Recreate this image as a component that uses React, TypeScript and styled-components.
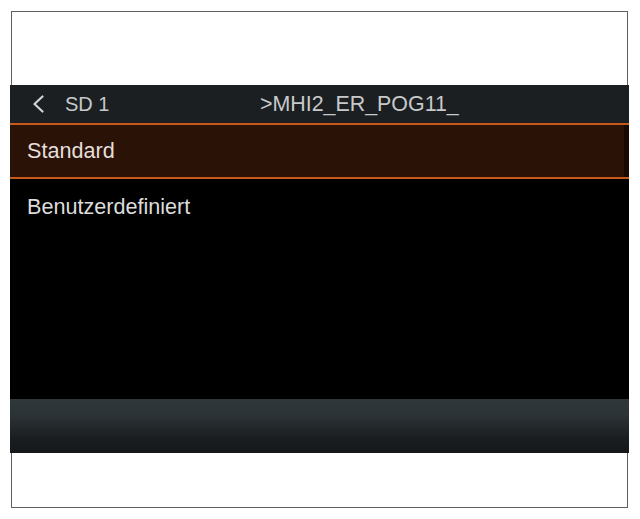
import React from "react";
import styled, { createGlobalStyle } from "styled-components";

const GlobalStyle = createGlobalStyle`
  html, body {
    margin: 0;
    padding: 0;
    background: #ffffff;
    font-family: "Liberation Sans", Arial, sans-serif;
  }
`;

const Frame = styled.div`
  box-sizing: border-box;
  width: 617px;
  height: 497px;
  margin: 11px 0 0 11px;
  border: 1px solid #5f5f5f;
  background: #ffffff;
  display: flex;
  flex-direction: column;
`;

const Screen = styled.div`
  margin: 73px -2px 0 -2px;
  height: 368px;
  background: #000000;
  display: flex;
  flex-direction: column;
`;

const Header = styled.div`
  height: 38px;
  flex: none;
  background: #1b1f22;
  display: flex;
  align-items: center;
  padding-left: 22px;
  color: #c8c9ca;
  font-size: 20px;
`;

const BackGroup = styled.div`
  width: 228px;
  display: flex;
  align-items: center;
  gap: 20px;
`;

const BackIcon = styled.svg`
  width: 13px;
  height: 18px;
  display: block;
`;

const Title = styled.span`
  font-size: 21.4px;
`;

const List = styled.div`
  flex: 1;
  display: flex;
  flex-direction: column;
`;

const Row = styled.div<{ $selected?: boolean }>`
  height: 52px;
  border-top: 2px solid ${(p) => (p.$selected ? "#c8581b" : "transparent")};
  border-bottom: 2px solid ${(p) => (p.$selected ? "#c8581b" : "transparent")};
  background: ${(p) => (p.$selected ? "#2a1207" : "transparent")};
  box-shadow: ${(p) => (p.$selected ? "inset -5px 0 0 #170903" : "none")};
  display: flex;
  align-items: center;
  padding-left: 17px;
  color: ${(p) => (p.$selected ? "#e4dfdb" : "#dcdcdc")};
  font-size: 21.6px;
`;

const BottomBar = styled.div`
  height: 54px;
  flex: none;
  background: linear-gradient(
    180deg,
    #30373a 0%,
    #2c3336 30%,
    #1a1e20 72%,
    #15181a 100%
  );
`;

export default function App() {
  return (
    <>
      <GlobalStyle />
      <Frame>
        <Screen>
          <Header>
            <BackGroup>
              <BackIcon viewBox="0 0 13 18">
                <polyline
                  points="10.5,1.5 2.5,9 10.5,16.5"
                  fill="none"
                  stroke="#d2d3d4"
                  strokeWidth="2.2"
                  strokeLinecap="round"
                  strokeLinejoin="round"
                />
              </BackIcon>
              <span>SD 1</span>
            </BackGroup>
            <Title>&gt;MHI2_ER_POG11_</Title>
          </Header>
          <List>
            <Row $selected>Standard</Row>
            <Row>Benutzerdefiniert</Row>
          </List>
          <BottomBar />
        </Screen>
      </Frame>
    </>
  );
}
